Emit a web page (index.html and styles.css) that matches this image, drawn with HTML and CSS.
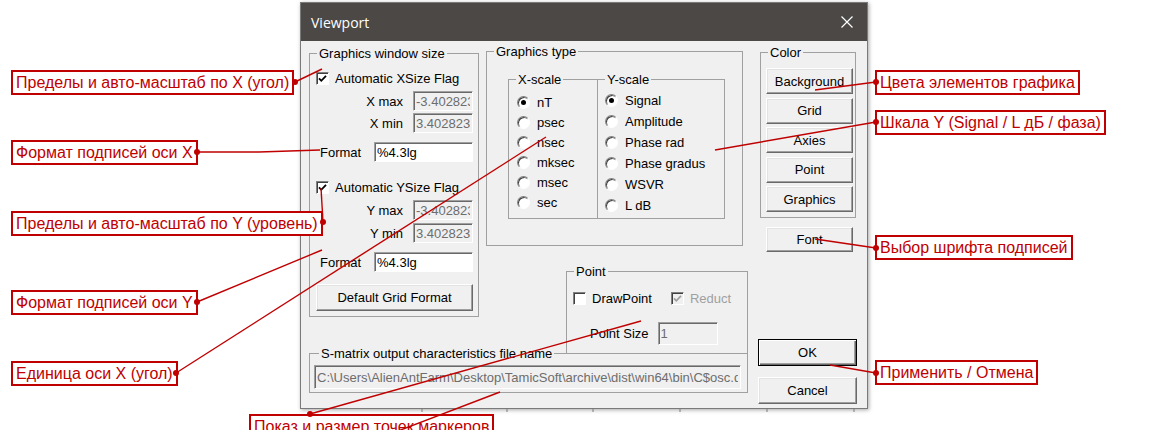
FILE: index.html
```html
<!DOCTYPE html>
<html lang="ru">
<head>
    <meta charset="UTF-8">
    <meta name="viewport" content="width=device-width, initial-scale=1.0">
    <title>Viewport</title>
    <link rel="stylesheet" href="styles.css">
</head>
<body>
    <div class="window">
        <div class="titlebar">
            <span class="title">Viewport</span>
            <svg class="close" width="12" height="12" viewBox="0 0 12 12"><path d="M0.5 0.5L11.5 11.5M11.5 0.5L0.5 11.5" stroke="#fff" stroke-width="1.2"/></svg>
        </div>
        <div class="client">
            <div class="main">
                <div class="top-row">
                    <fieldset class="group gws">
                        <legend>Graphics window size</legend>
                        <label class="check"><span class="box"><svg width="11" height="11" viewBox="0 0 11 11"><path d="M2 5.3L4.3 7.8L9 2.8" fill="none" stroke="#000" stroke-width="1.8"/></svg></span>Automatic XSize Flag</label>
                        <div class="limit"><span>X max</span><input class="edit small" value="-3.40282347e+38" disabled></div>
                        <div class="limit tight"><span>X min</span><input class="edit small" value="3.40282347e+38" disabled></div>
                        <div class="format"><span>Format</span><input class="edit wide" value="%4.3lg"></div>
                        <label class="check second"><span class="box"><svg width="11" height="11" viewBox="0 0 11 11"><path d="M2 5.3L4.3 7.8L9 2.8" fill="none" stroke="#000" stroke-width="1.8"/></svg></span>Automatic YSize Flag</label>
                        <div class="limit"><span>Y max</span><input class="edit small" value="-3.40282347e+38" disabled></div>
                        <div class="limit"><span>Y min</span><input class="edit small" value="3.40282347e+38" disabled></div>
                        <div class="format"><span>Format</span><input class="edit wide" value="%4.3lg"></div>
                        <button class="btn grid-format">Default Grid Format</button>
                    </fieldset>

                    <div class="right-col">
                        <fieldset class="group gtype">
                            <legend>Graphics type</legend>
                            <div class="scales">
                                <fieldset class="group xscale">
                                    <legend>X-scale</legend>
                                    <div class="opt"><span class="radio on"></span>nT</div>
                                    <div class="opt"><span class="radio"></span>psec</div>
                                    <div class="opt"><span class="radio"></span>nsec</div>
                                    <div class="opt"><span class="radio"></span>mksec</div>
                                    <div class="opt"><span class="radio"></span>msec</div>
                                    <div class="opt"><span class="radio"></span>sec</div>
                                </fieldset>
                                <fieldset class="group yscale">
                                    <legend>Y-scale</legend>
                                    <div class="opt"><span class="radio on"></span>Signal</div>
                                    <div class="opt"><span class="radio"></span>Amplitude</div>
                                    <div class="opt"><span class="radio"></span>Phase rad</div>
                                    <div class="opt"><span class="radio"></span>Phase gradus</div>
                                    <div class="opt"><span class="radio"></span>WSVR</div>
                                    <div class="opt"><span class="radio"></span>L dB</div>
                                </fieldset>
                            </div>
                        </fieldset>

                        <fieldset class="group point">
                            <legend>Point</legend>
                            <div class="point-flags">
                                <label class="check"><span class="box"></span>DrawPoint</label>
                                <label class="check off"><span class="box"><svg width="11" height="11" viewBox="0 0 11 11"><path d="M2 5.3L4.3 7.8L9 2.8" fill="none" stroke="#a0a0a0" stroke-width="1.8"/></svg></span>Reduct</label>
                            </div>
                            <div class="point-size"><span>Point Size</span><input class="edit size" value="1" disabled></div>
                        </fieldset>
                    </div>
                </div>

                <fieldset class="group smatrix">
                    <legend>S-matrix output characteristics file name</legend>
                    <input class="edit path" value="C:\Users\AlienAntFarm\Desktop\TamicSoft\archive\dist\win64\bin\C$osc.dat" disabled>
                </fieldset>
            </div>

            <div class="side">
                <fieldset class="group color">
                    <legend>Color</legend>
                    <button class="btn">Background</button>
                    <button class="btn">Grid</button>
                    <button class="btn">Axies</button>
                    <button class="btn">Point</button>
                    <button class="btn">Graphics</button>
                </fieldset>
                <button class="btn font-btn">Font</button>
                <button class="btn ok default">OK</button>
                <button class="btn cancel">Cancel</button>
            </div>
        </div>
    </div>

    <!-- callouts -->
    <div class="note note-xlim">Пределы и авто-масштаб по X (угол)</div>
    <div class="note note-xfmt">Формат подписей оси X</div>
    <div class="note note-ylim">Пределы и авто-масштаб по Y (уровень)</div>
    <div class="note note-yfmt">Формат подписей оси Y</div>
    <div class="note note-xunit">Единица оси X (угол)</div>
    <div class="note note-colors">Цвета элементов графика</div>
    <div class="note note-yscale">Шкала Y (Signal / L дБ / фаза)</div>
    <div class="note note-font">Выбор шрифта подписей</div>
    <div class="note note-ok">Применить / Отмена</div>
    <div class="note note-point">Показ и размер точек маркеров</div>

    <svg class="leaders" width="1171" height="430" viewBox="0 0 1171 430">
        <g stroke="#7a7a7a" stroke-width="1">
            <path d="M422 409v3M507 409v3M593 409v3M680 409v3M767 409v3M854 409v3"/>
        </g>
        <g fill="none" stroke="#c00000" stroke-width="1.4">
            <path d="M295 82L322 69"/>
            <path d="M197 152L259 152L320 150"/>
            <path d="M323 222L321 188"/>
            <path d="M197 302L322 250"/>
            <path d="M176 373L546 137"/>
            <path d="M876 82L815 90"/>
            <path d="M876 122L715 150"/>
            <path d="M876 248L815 239"/>
            <path d="M876 373L830 365"/>
            <path d="M310 414L641 321"/>
            <path d="M398 431L500 392"/>
        </g>
        <g fill="#c00000">
            <circle cx="295" cy="82" r="3"/>
            <circle cx="197" cy="152" r="3"/>
            <circle cx="323" cy="222" r="3"/>
            <circle cx="197" cy="302" r="3"/>
            <circle cx="176" cy="373" r="3"/>
            <circle cx="876" cy="82" r="3"/>
            <circle cx="876" cy="122" r="3"/>
            <circle cx="876" cy="248" r="3"/>
            <circle cx="876" cy="373" r="3"/>
            <circle cx="310" cy="414" r="3"/>
        </g>
    </svg>
</body>
</html>
```

FILE: styles.css
```css
* {
    box-sizing: border-box;
}
body {
    margin: 0;
    width: 1171px;
    height: 430px;
    position: relative;
    overflow: hidden;
    background: #fff;
    font-family: "Liberation Sans", Arial, sans-serif;
    font-size: 13px;
    color: #000;
}

/* dialog window */
.window {
    margin: 2px 0 0 300px;
    width: 568px;
    height: 407px;
    border: 1px solid #7a7a7a;
    background: #f0f0f0;
    box-shadow: 1px 1px 4px rgba(0, 0, 0, 0.35);
    display: flex;
    flex-direction: column;
}
.titlebar {
    height: 38px;
    flex: none;
    background: #4b4845;
    color: #fff;
    display: flex;
    align-items: center;
    justify-content: space-between;
    padding: 0 14px 0 10px;
}
.title {
    font-family: "Open Sans", "Liberation Sans", sans-serif;
    font-size: 14px;
}
.close {
    display: block;
}
.client {
    flex: 1;
    display: flex;
    gap: 10px;
    padding: 3px 10px 4px 8px;
}
.main {
    width: 439px;
    display: flex;
    flex-direction: column;
}
.top-row {
    display: flex;
    gap: 7px;
    align-items: flex-start;
}
.right-col {
    width: 262px;
    display: flex;
    flex-direction: column;
}
.side {
    width: 99px;
    display: flex;
    flex-direction: column;
}

/* group boxes */
.group {
    --pad: 6px;
    margin: 0;
    min-width: 0;
    border: 1px solid #a0a0a0;
    padding: 0 0 0 var(--pad);
}
.group legend {
    font-size: 13px;
    line-height: 15px;
    padding: 0 2px;
    margin-left: calc(7px - var(--pad));
}
.gws {
    width: 170px;
    margin-top: 2px;
    padding: 7px 5px 5px var(--pad);
}
.gtype {
    --pad: 21px;
    width: 257px;
    padding-bottom: 26px;
}
.scales {
    display: flex;
    margin-top: 13px;
}
.xscale {
    --pad: 8px;
    width: 90px;
    padding-top: 5px;
    padding-bottom: 6px;
}
.yscale {
    --pad: 7px;
    width: 128px;
    margin-left: -1px;
    padding-top: 3px;
}
.yscale .opt {
    height: 21px;
}
/* its bottom edge is the top line of the S-matrix group */
.point {
    width: 182px;
    margin: 18px 0 0 80px;
    border-bottom: none;
    padding-top: 9px;
    padding-bottom: 8px;
}
.smatrix {
    --pad: 4px;
    margin-top: -7px;
    padding-top: 4px;
    padding-bottom: 3px;
}
.smatrix legend {
    margin-left: 5px;
}
.color {
    --pad: 5px;
    width: 96px;
    margin: 1px 0 0 2px;
    padding-top: 8px;
    padding-bottom: 5px;
}

/* rows */
.check {
    display: flex;
    align-items: center;
    gap: 6px;
    height: 20px;
}
.check.second {
    margin-top: 15px;
}
.check.off {
    color: #a0a0a0;
    margin-left: 19px;
}
.limit {
    display: flex;
    justify-content: flex-end;
    align-items: center;
    gap: 10px;
    margin-top: 3px;
}
.limit.tight {
    margin-top: 2px;
}
.format {
    display: flex;
    align-items: center;
    justify-content: space-between;
    padding-left: 4px;
    margin-top: 9px;
}
.opt {
    display: flex;
    align-items: center;
    gap: 7px;
    height: 20px;
}
.point-flags {
    display: flex;
    height: 20px;
}
.point-size {
    display: flex;
    align-items: center;
    gap: 9px;
    margin-top: 14px;
    padding-left: 17px;
}

/* controls */
.box {
    width: 13px;
    height: 13px;
    flex: none;
    border: 1px solid;
    border-color: #808080 #fff #fff #808080;
    box-shadow: inset 1px 1px #404040;
    background: #fff;
}
.box svg {
    display: block;
}
.check.off .box {
    background: #f0f0f0;
}
.radio {
    width: 13px;
    height: 13px;
    flex: none;
    border-radius: 50%;
    border: 1px solid;
    border-color: #808080 #fff #fff #808080;
    box-shadow: inset 1px 1px #404040;
    background: #fff;
    display: flex;
    align-items: center;
    justify-content: center;
}
.radio.on::after {
    content: "";
    width: 5px;
    height: 5px;
    border-radius: 50%;
    background: #000;
}
.edit {
    height: 20px;
    font: inherit;
    color: #000;
    background: #fff;
    border: 1px solid;
    border-color: #a0a0a0 #fff #fff #a0a0a0;
    box-shadow: inset 1px 1px #696969;
    padding: 0 2px;
    outline: none;
}
.edit:disabled {
    background: #f0f0f0;
    color: #6d6d6d;
}
.edit.small {
    width: 60px;
}
.edit.wide {
    width: 99px;
}
.edit.size {
    width: 60px;
    height: 23px;
}
.edit.path {
    width: 427px;
    height: 24px;
}
.btn {
    display: block;
    width: 87px;
    height: 26px;
    padding: 0;
    font: inherit;
    color: #000;
    background: #f0f0f0;
    border: 1px solid;
    border-color: #fff #696969 #696969 #fff;
    box-shadow: inset -1px -1px #a0a0a0, inset 1px 1px #e3e3e3;
}
.color .btn + .btn {
    margin-top: 3.5px;
}
.grid-format {
    width: 157px;
    height: 27px;
    margin-top: 12px;
}
.font-btn {
    margin: 9px 0 0 8px;
    height: 25px;
}
.ok {
    width: 99px;
    height: 27px;
    margin-top: auto;
}
.btn.default {
    border-color: #000;
    box-shadow: inset 1px 1px #fff, inset -1px -1px #696969, inset -2px -2px #a0a0a0;
}
.cancel {
    width: 99px;
    height: 27px;
    margin-top: 11px;
}

/* callouts over the screenshot */
.note {
    position: absolute;
    z-index: 1;
    border: 2px solid #c00000;
    background: #fff;
    color: #c00000;
    font-size: 16px;
    line-height: 21px;
    padding: 0 3px;
    white-space: nowrap;
}
.note-xlim { left: 11px; top: 70px; }
.note-xfmt { left: 11px; top: 140px; }
.note-ylim { left: 11px; top: 211px; }
.note-yfmt { left: 11px; top: 290px; }
.note-xunit { left: 11px; top: 361px; }
.note-colors { left: 875px; top: 70px; }
.note-yscale { left: 875px; top: 110px; }
.note-font { left: 875px; top: 235px; }
.note-ok { left: 875px; top: 360px; }
.note-point { left: 249px; top: 414px; }
.leaders {
    position: absolute;
    left: 0;
    top: 0;
    z-index: 2;
    pointer-events: none;
}
```
